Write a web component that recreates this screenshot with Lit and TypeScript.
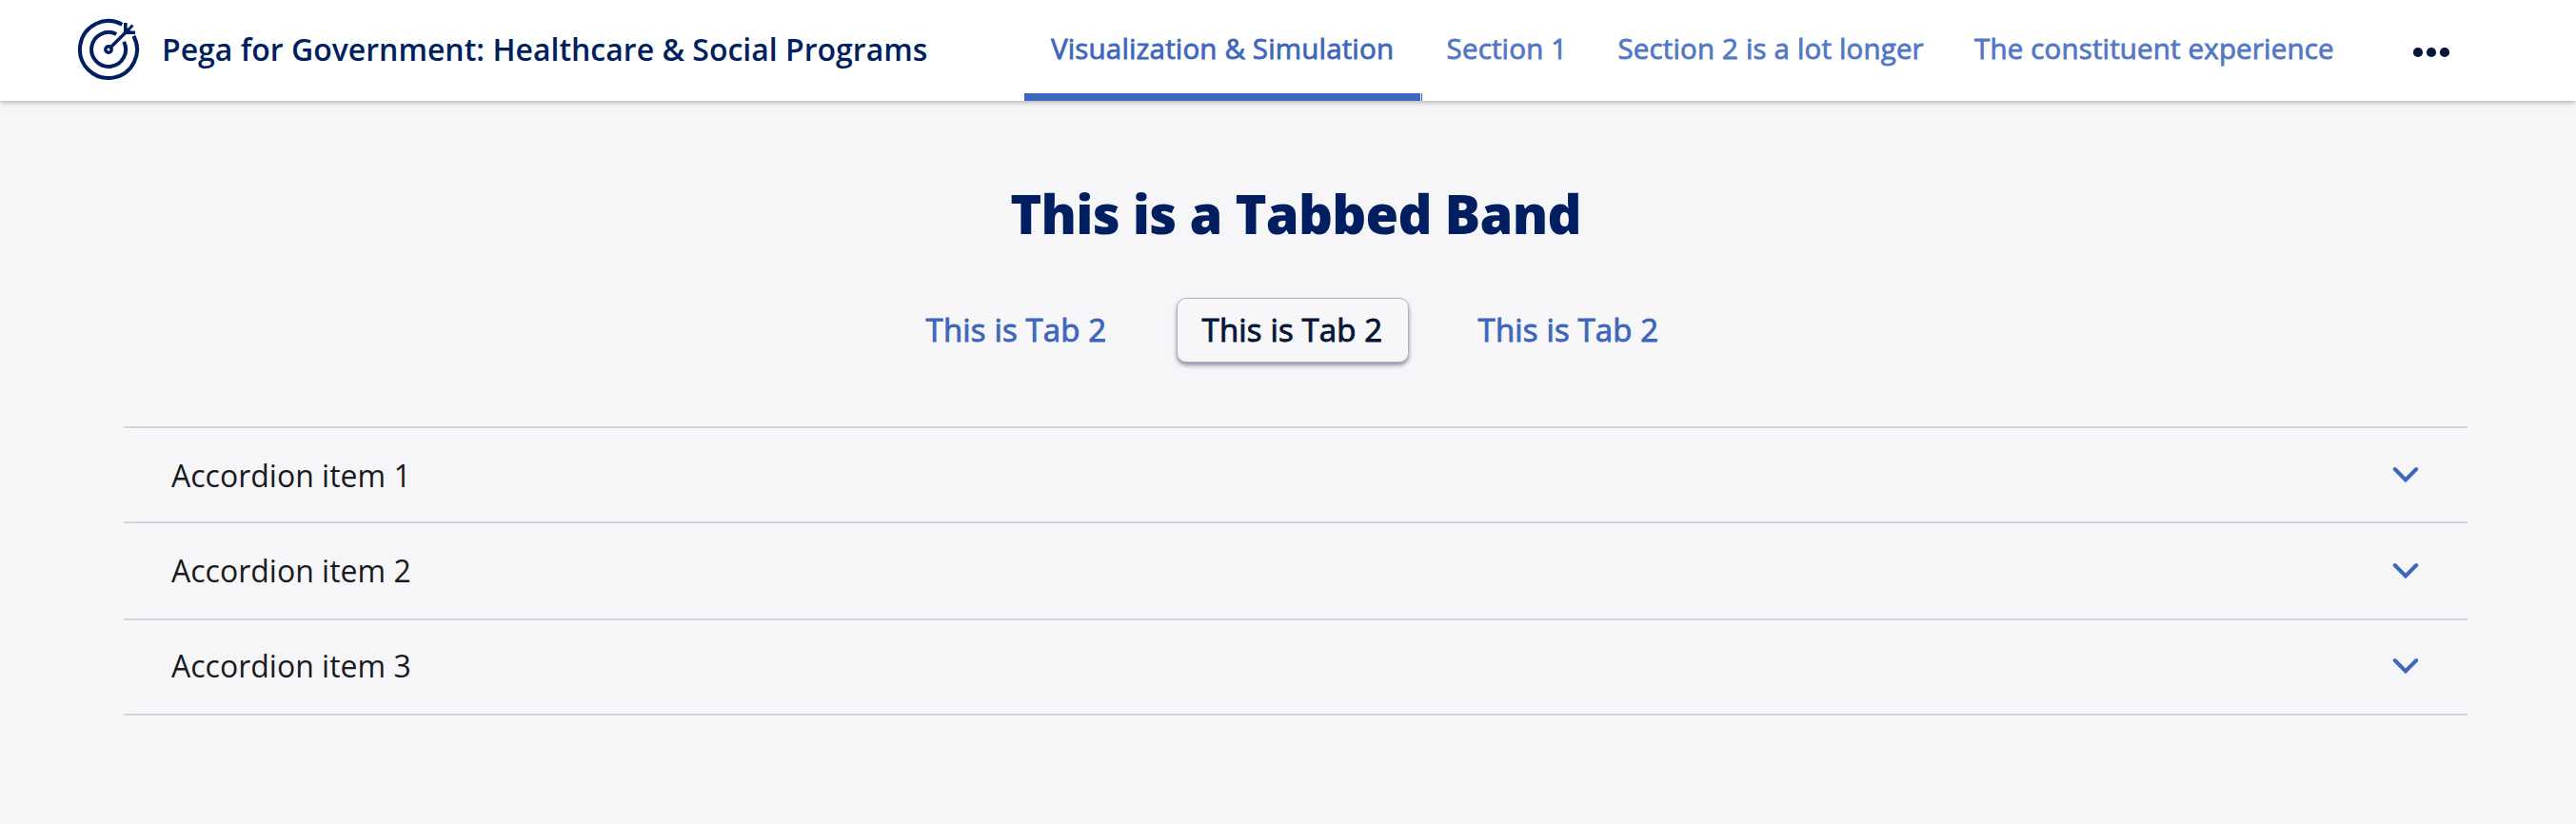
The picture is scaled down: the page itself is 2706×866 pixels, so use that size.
import { LitElement, html, css } from "lit";
import { customElement } from "lit/decorators.js";

@customElement("app-root")
export class AppRoot extends LitElement {
  static styles = css`
    :host { display: block; width: 100%; height: 866px; overflow: hidden; background: #f6f6f9; font-family: "Open Sans", sans-serif; }
    .bar { display: flex; height: 106px; background: #fff; box-shadow: 0 1px 6px rgba(0,0,0,.34); position: relative; box-sizing: border-box; padding: 0 130px 0 80px; }
    .logo { width: 68px; height: 68px; margin-top: 18px; flex: none; }
    .name { width: 906px; margin-left: 22px; color: #001f60; font-size: 32px; font-weight: 600; line-height: 44px; padding-top: 30px; white-space: nowrap; }
    .nav { display: flex; }
    .link { box-sizing: border-box; height: 106px; padding: 30px 26.6px 0; font-size: 29.5px; line-height: 41px; -webkit-text-stroke: .8px currentColor; letter-spacing: .16px; color: #5277c4; white-space: nowrap; border-bottom: 8px solid transparent; }
    .link.on { color: #3e66bc; border-color: #3e66bc; width: 416px; padding-left: 28px; }
    .tick { width: 1px; height: 8px; margin: 98px -1px 0 1px; background: #3e66bc; }
    .more { width: 44px; height: 20px; margin: 45px 0 0 auto; }
    h1 { margin: 73px 0 0; padding-left: 16px; text-align: center; color: #001f60; font-size: 56px; line-height: 90px; font-weight: 800; letter-spacing: -.72px; }
    .tabs { display: flex; justify-content: center; gap: 46px; margin-top: 44px; padding-left: 10px; }
    .tab { box-sizing: border-box; width: 244px; height: 68px; border: 1px solid transparent; border-radius: 10px; background: #f7f7fa; color: #3e66bc; text-align: center; font-size: 33px; line-height: 66px; -webkit-text-stroke: .9px currentColor; letter-spacing: .15px; padding-right: 1px; }
    .tab.on { color: #061638; border-color: #b0b2c3; box-shadow: 0 3px 4px rgba(70,80,110,.6); }
    .patch { width: 307px; height: 36px; margin: 3px 0 28px 923px; background: #f7f7fa; }
    .list { margin: 0 114px 0 130px; border-top: 2px solid #d3d4d7; }
    .item { box-sizing: border-box; display: flex; justify-content: space-between; align-items: flex-start; height: 100px; border-bottom: 2px solid #d3d4d7; padding: 28px 51.5px 0 50px; font-size: 32px; line-height: 44px; color: #1a1a1c; }
    .item:nth-child(2) { height: 102px; }
    .item:nth-child(3) { padding-top: 26px; }
    .chev { width: 28px; height: 18px; margin-top: 12px; }
    .item:nth-child(n+2) .chev { margin-top: 13px; }
  `;
  render() {
    return html`
      <header class="bar">
        <svg class="logo" viewBox="0 0 68 68" fill="none" stroke="#001f60" stroke-width="4">
          <path d="M48.3 7.7A30 30 0 1 0 60.3 19.7"/>
          <path d="M42.2 17.9A18 18 0 1 0 50.1 25.8"/>
          <circle cx="34" cy="34" r="3.2" stroke-width="3.4"/>
          <path d="M36 32 53 15" stroke-width="3.6"/>
          <path d="M52 16 59.5 8.5" stroke-width="3"/>
          <path d="M50 6H53.6V11.5L57.5 14.4H62V18H50Z" fill="#001f60" stroke="none"/>
        </svg>
        <div class="name"><span>Pega for Government: Healthcare &amp; Social Programs</span></div>
        <nav class="nav">
          <div class="link on">Visualization &amp; Simulation</div><i class="tick"></i><div class="link">Section 1</div><div class="link">Section 2 is a lot longer</div><div class="link">The constituent experience</div>
        </nav>
        <svg class="more" viewBox="0 0 44 20" fill="#061638"><circle cx="8" cy="10" r="5.1"/><circle cx="22" cy="10" r="5.1"/><circle cx="36" cy="10" r="5.1"/></svg>
      </header>
      <h1>This is a Tabbed Band</h1>
      <div class="tabs"><div class="tab">This is Tab 2</div><div class="tab on">This is Tab 2</div><div class="tab">This is Tab 2</div></div>
      <div class="patch"></div>
      <div class="list">${[1, 2, 3].map((n) => html`<div class="item"><span>Accordion item ${n}</span><svg class="chev" viewBox="0 0 28 18" fill="none" stroke="#3e66bc" stroke-width="4" stroke-linecap="round"><path d="M2.8 3 14 14.4 25.2 3"/></svg></div>`)}</div>
    `;
  }
}
